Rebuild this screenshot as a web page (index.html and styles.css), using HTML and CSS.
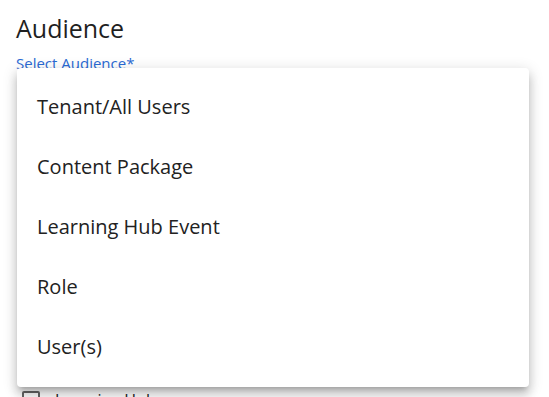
FILE: index.html
```html
<!DOCTYPE html>
<html>
<head>
<meta charset="utf-8">
<link rel="stylesheet" href="styles.css">
</head>
<body>
<div class="page">
  <h1 class="title">Audience</h1>
  <div class="field">
    <label class="label">Select Audience*</label>
    <div class="select"></div>
    <ul class="menu">
      <li class="item">Tenant/All Users</li>
      <li class="item">Content Package</li>
      <li class="item">Learning Hub Event</li>
      <li class="item">Role</li>
      <li class="item">User(s)</li>
    </ul>
  </div>
  <div class="check-row">
    <span class="box"></span>
    <span class="check-text">Learning Hub</span>
  </div>
</div>
</body>
</html>
```
FILE: styles.css
```css
html, body {
  margin: 0;
  padding: 0;
  background: #fff;
  overflow: hidden;
}
body {
  font-family: "Open Sans", "Noto Sans", sans-serif;
  color: #222;
}
.page {
  padding: 12px 16px 0 16px;
  display: flex;
  flex-direction: column;
}
.title {
  margin: 0;
  font-size: 25px;
  font-weight: 400;
  line-height: 32px;
  color: #1f1f1f;
}
.field {
  position: relative;
  margin-top: 9px;
}
.label {
  display: block;
  font-size: 15px;
  line-height: 20px;
  color: #2a6ad4;
}
.select {
  height: 304px;
  border-left: 1px solid transparent;
}
.menu {
  position: absolute;
  left: 1px;
  top: 15px;
  width: 512px;
  margin: 0;
  padding: 9px 0 10px;
  list-style: none;
  background: #fff;
  border-radius: 4px;
  box-shadow: 0 5px 5px -3px rgba(0,0,0,0.2), 0 8px 10px 1px rgba(0,0,0,0.14), 0 3px 14px 2px rgba(0,0,0,0.12);
}
.item {
  height: 60px;
  line-height: 60px;
  padding-left: 20px;
  font-size: 20px;
  color: #222;
}
.check-row {
  display: flex;
  align-items: center;
  gap: 15px;
  margin-top: 12px;
  padding-left: 6px;
}
.box {
  width: 14px;
  height: 14px;
  border: 2px solid #666;
  border-radius: 2px;
  flex: none;
}
.check-text {
  font-size: 16px;
  color: #222;
}
```
